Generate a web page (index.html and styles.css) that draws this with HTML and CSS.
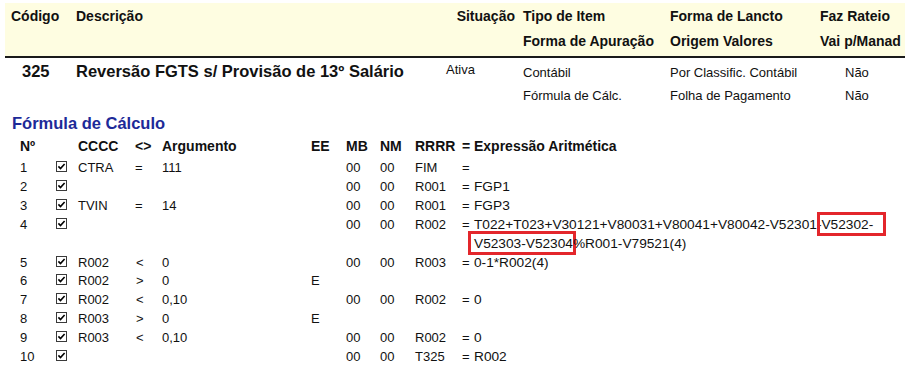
FILE: index.html
```html
<!DOCTYPE html>
<html lang="pt">
<head>
<meta charset="utf-8">
<title>Fórmula de Cálculo</title>
<link rel="stylesheet" href="styles.css">
</head>
<body>
<div class="head">
  <div class="hrow">
    <span>Código</span><span>Descrição</span><span class="sit">Situação</span><span class="tipo">Tipo de Item</span><span>Forma de Lancto</span><span>Faz Rateio</span>
  </div>
  <div class="hrow">
    <span></span><span></span><span></span><span class="tipo">Forma de Apuração</span><span>Origem Valores</span><span>Vai p/Manad</span>
  </div>
</div>

<div class="item">
  <div class="irow first">
    <span class="big cod">325</span><span class="big">Reversão FGTS s/ Provisão de 13º Salário</span><span class="ativa">Ativa</span><span class="reg tipo">Contábil</span><span class="reg">Por Classific. Contábil</span><span class="reg nao">Não</span>
  </div>
  <div class="irow">
    <span></span><span></span><span></span><span class="reg tipo">Fórmula de Cálc.</span><span class="reg">Folha de Pagamento</span><span class="reg nao">Não</span>
  </div>
</div>

<h2 class="sec">Fórmula de Cálculo</h2>

<div class="ftable">
  <div class="frow fhead">
    <span>Nº</span><span></span><span>CCCC</span><span>&lt;&gt;</span><span>Argumento</span><span>EE</span><span>MB</span><span>NM</span><span>RRRR</span><span>=</span><span>Expressão Aritmética</span>
  </div>
  <div class="frow">
    <span>1</span><span><svg class="cb" viewBox="0 0 11 11"><rect x="0.5" y="0.5" width="10" height="10" fill="#fff" stroke="#3a3a3a"/><path d="M2.4 5.4 L4.5 7.6 L8.6 3" fill="none" stroke="#000" stroke-width="1.6"/></svg></span><span>CTRA</span><span>=</span><span>111</span><span></span><span>00</span><span>00</span><span>FIM</span><span>=</span><span class="ex"></span>
  </div>
  <div class="frow">
    <span>2</span><span><svg class="cb" viewBox="0 0 11 11"><rect x="0.5" y="0.5" width="10" height="10" fill="#fff" stroke="#3a3a3a"/><path d="M2.4 5.4 L4.5 7.6 L8.6 3" fill="none" stroke="#000" stroke-width="1.6"/></svg></span><span></span><span></span><span></span><span></span><span>00</span><span>00</span><span>R001</span><span>=</span><span class="ex">FGP1</span>
  </div>
  <div class="frow">
    <span>3</span><span><svg class="cb" viewBox="0 0 11 11"><rect x="0.5" y="0.5" width="10" height="10" fill="#fff" stroke="#3a3a3a"/><path d="M2.4 5.4 L4.5 7.6 L8.6 3" fill="none" stroke="#000" stroke-width="1.6"/></svg></span><span>TVIN</span><span>=</span><span>14</span><span></span><span>00</span><span>00</span><span>R001</span><span>=</span><span class="ex">FGP3</span>
  </div>
  <div class="frow">
    <span>4</span><span><svg class="cb" viewBox="0 0 11 11"><rect x="0.5" y="0.5" width="10" height="10" fill="#fff" stroke="#3a3a3a"/><path d="M2.4 5.4 L4.5 7.6 L8.6 3" fill="none" stroke="#000" stroke-width="1.6"/></svg></span><span></span><span></span><span></span><span></span><span>00</span><span>00</span><span>R002</span><span>=</span><span class="ex">T022+T023+V30121+V80031+V80041+V80042-V52301-<span class="hl hl1">V52302-</span><br><span class="hl hl2">V52303-V52304</span>%R001-V79521(4)</span>
  </div>
  <div class="frow">
    <span>5</span><span><svg class="cb" viewBox="0 0 11 11"><rect x="0.5" y="0.5" width="10" height="10" fill="#fff" stroke="#3a3a3a"/><path d="M2.4 5.4 L4.5 7.6 L8.6 3" fill="none" stroke="#000" stroke-width="1.6"/></svg></span><span>R002</span><span class="op">&lt;</span><span>0</span><span></span><span>00</span><span>00</span><span>R003</span><span>=</span><span class="ex">0-1*R002(4)</span>
  </div>
  <div class="frow">
    <span>6</span><span><svg class="cb" viewBox="0 0 11 11"><rect x="0.5" y="0.5" width="10" height="10" fill="#fff" stroke="#3a3a3a"/><path d="M2.4 5.4 L4.5 7.6 L8.6 3" fill="none" stroke="#000" stroke-width="1.6"/></svg></span><span>R002</span><span class="op">&gt;</span><span>0</span><span>E</span><span></span><span></span><span></span><span></span><span class="ex"></span>
  </div>
  <div class="frow">
    <span>7</span><span><svg class="cb" viewBox="0 0 11 11"><rect x="0.5" y="0.5" width="10" height="10" fill="#fff" stroke="#3a3a3a"/><path d="M2.4 5.4 L4.5 7.6 L8.6 3" fill="none" stroke="#000" stroke-width="1.6"/></svg></span><span>R002</span><span class="op">&lt;</span><span>0,10</span><span></span><span>00</span><span>00</span><span>R002</span><span>=</span><span class="ex">0</span>
  </div>
  <div class="frow">
    <span>8</span><span><svg class="cb" viewBox="0 0 11 11"><rect x="0.5" y="0.5" width="10" height="10" fill="#fff" stroke="#3a3a3a"/><path d="M2.4 5.4 L4.5 7.6 L8.6 3" fill="none" stroke="#000" stroke-width="1.6"/></svg></span><span>R003</span><span class="op">&gt;</span><span>0</span><span>E</span><span></span><span></span><span></span><span></span><span class="ex"></span>
  </div>
  <div class="frow">
    <span>9</span><span><svg class="cb" viewBox="0 0 11 11"><rect x="0.5" y="0.5" width="10" height="10" fill="#fff" stroke="#3a3a3a"/><path d="M2.4 5.4 L4.5 7.6 L8.6 3" fill="none" stroke="#000" stroke-width="1.6"/></svg></span><span>R003</span><span class="op">&lt;</span><span>0,10</span><span></span><span>00</span><span>00</span><span>R002</span><span>=</span><span class="ex">0</span>
  </div>
  <div class="frow">
    <span>10</span><span><svg class="cb" viewBox="0 0 11 11"><rect x="0.5" y="0.5" width="10" height="10" fill="#fff" stroke="#3a3a3a"/><path d="M2.4 5.4 L4.5 7.6 L8.6 3" fill="none" stroke="#000" stroke-width="1.6"/></svg></span><span></span><span></span><span></span><span></span><span>00</span><span>00</span><span>T325</span><span>=</span><span class="ex">R002</span>
  </div>
</div>
</body>
</html>
```

FILE: styles.css
```css
html, body {
  margin: 0;
  padding: 0;
  background: #fff;
}
body {
  font-family: "Liberation Sans", Arial, sans-serif;
  color: #111;
  width: 916px;
  height: 368px;
  overflow: hidden;
}

/* header band */
.head {
  margin: 3px 11px 0 5px;
  padding: 1px 0 2px 6px;
  background: #fefde1;
  border-bottom: 2px solid #1a1a1a;
}
.hrow, .irow {
  display: grid;
  grid-template-columns: 65px 345px 94px 155px 150px 1fr;
}
.hrow {
  font-size: 14px;
  font-weight: bold;
  line-height: 25px;
  height: 25px;
}
.sit { text-align: right; }
.tipo { padding-left: 8px; }

/* item rows */
.item {
  margin: 2px 11px 0 5px;
  padding-left: 6px;
}
.irow { height: 25px; }
.irow.first { height: 23px; }
.big {
  font-size: 16.5px;
  font-weight: bold;
  line-height: 23px;
  white-space: nowrap;
}
.cod { padding-left: 11px; }
.reg {
  font-size: 13px;
  line-height: 25px;
  white-space: nowrap;
}
.ativa {
  font-size: 13px;
  line-height: 19px;
  padding-left: 25px;
}
.nao { padding-left: 25px; }

/* section title */
.sec {
  margin: 5px 0 0 12px;
  font-size: 16.5px;
  line-height: 20px;
  font-weight: bold;
  color: #1d2a98;
}

/* formula table */
.ftable {
  padding-left: 20px;
}
.frow {
  display: grid;
  grid-template-columns: 36px 22px 57px 27px 149px 35px 34px 35px 47px 12px 1fr;
  font-size: 13px;
  line-height: 18.9px;
}
.fhead {
  font-size: 14px;
  font-weight: bold;
  line-height: 26px;
}
.op { padding-left: 1px; }
.ex {
  font-size: 13.7px;
  white-space: nowrap;
}
.cb {
  width: 11px;
  height: 11px;
  vertical-align: 0px;
}

/* red annotation boxes */
.hl {
  border: 3px solid #e3262b;
  padding: 2px 0 1px;
}
.hl1 {
  margin-left: -4px;
  padding-left: 1px;
  padding-right: 10px;
}
.hl2 {
  margin-left: -6px;
  padding-left: 3px;
  padding-right: 0;
  margin-right: -3px;
}
```
